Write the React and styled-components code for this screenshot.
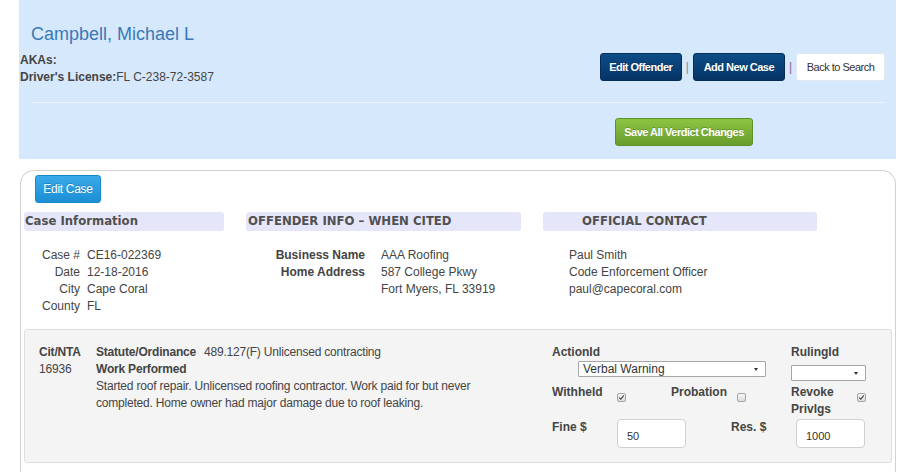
import React from 'react'
import styled, { createGlobalStyle } from 'styled-components'

const GlobalStyle = createGlobalStyle`
  body {
    margin: 0;
    font-family: "Liberation Sans", Arial, sans-serif;
    font-size: 12px;
    color: #333;
    background: #fff;
  }
`

const Page = styled.div`
  width: 877px;
  margin-left: 19px;
`

const HeaderPanel = styled.div`
  background: #d6e8fc;
  height: 159px;
  box-sizing: border-box;
  padding-top: 24px;
`

const OffenderName = styled.div`
  font-size: 18px;
  line-height: 20px;
  color: #3a79b6;
  padding-left: 12px;
`

const InfoRow = styled.div`
  display: flex;
  justify-content: space-between;
  align-items: flex-start;
  margin-top: 8px;
  padding-left: 1px;
  padding-right: 11px;
`

const InfoLines = styled.div`
  line-height: 17px;
  color: #444;
`

const Bold = styled.span`
  font-weight: bold;
  color: #444;
`

const ButtonGroup = styled.div`
  display: flex;
  align-items: center;
  margin-top: 1px;
`

const Button = styled.button`
  box-sizing: border-box;
  height: 28px;
  width: ${p => p.$w}px;
  padding: 0;
  border-radius: 3px;
  font-family: "Liberation Sans", Arial, sans-serif;
  font-size: ${p => (p.$variant === 'info' ? 12 : 11)}px;
  letter-spacing: ${p => (p.$variant === 'info' ? -0.3 : -0.5)}px;
  font-weight: ${p => (p.$variant === 'light' || p.$variant === 'info' ? 'normal' : 'bold')};
  cursor: pointer;
  color: ${p => (p.$variant === 'light' ? '#333' : '#fff')};
  border: 1px solid
    ${p =>
      p.$variant === 'light'
        ? '#e3e9f1'
        : p.$variant === 'success'
        ? '#5e9127'
        : p.$variant === 'info'
        ? '#1c88cc'
        : '#052d57'};
  background: ${p =>
    p.$variant === 'light'
      ? '#fff'
      : p.$variant === 'success'
      ? 'linear-gradient(#8cc543, #689c2c)'
      : p.$variant === 'info'
      ? 'linear-gradient(#3aaaea, #1b8ed5)'
      : 'linear-gradient(#0d4d88, #053465)'};
  text-shadow: ${p => (p.$variant === 'light' ? 'none' : '0 -1px 0 rgba(0,0,0,0.2)')};
`

const Separator = styled.span`
  margin: 0 4px;
  font-size: 12px;
  color: ${p => p.$color};
`

const Rule = styled.div`
  height: 1px;
  background: #ebf2fb;
  margin: 16px 11px 0 12px;
`

const SaveRow = styled.div`
  display: flex;
  justify-content: flex-end;
  padding-right: 143px;
  margin-top: 15px;
`

const CaseCard = styled.div`
  margin: 11px 0 0 1px;
  border: 1px solid #d3d3d3;
  border-bottom: none;
  border-radius: 14px 14px 0 0;
  min-height: 320px;
  padding: 4px 3px 0 3px;
`

const EditCaseWrap = styled.div`
  padding-left: 11px;
`

const Sections = styled.div`
  display: grid;
  grid-template-columns: 200px 275px 274px;
  column-gap: 22px;
  margin-top: 9px;
`

const SectionTitle = styled.div`
  height: 19px;
  line-height: 19px;
  background: #e6e6fa;
  border-radius: 3px;
  font-family: "DejaVu Sans", Verdana, sans-serif;
  font-size: 11.7px;
  font-weight: bold;
  color: #505050;
  padding-left: ${p => p.$indent}px;
`

const FieldGrid = styled.div`
  display: grid;
  grid-template-columns: ${p => p.$label}px 1fr;
  column-gap: ${p => p.$gap}px;
  line-height: 17px;
  margin-top: 16px;
`

const FieldLabel = styled.div`
  text-align: right;
  color: #444;
  font-weight: ${p => (p.$bold ? 'bold' : 'normal')};
`

const FieldValue = styled.div`
  color: #444;
`

const ContactLines = styled.div`
  margin-top: 16px;
  padding-left: 26px;
  line-height: 17px;
  color: #444;
`

const ChargeBox = styled.div`
  box-sizing: border-box;
  margin-top: 14px;
  width: 868px;
  height: 134px;
  background: #f4f4f4;
  border: 1px solid #dedede;
  border-radius: 3px;
  padding: 14px 0 0 14px;
  display: flex;
`

const CitColumn = styled.div`
  width: 57px;
  line-height: 17px;
  letter-spacing: -0.2px;
  color: #444;
`

const Detail = styled.div`
  width: 400px;
  margin-right: 56px;
  line-height: 17px;
  letter-spacing: -0.2px;
  color: #444;
`

const StatuteValue = styled.span`
  margin-left: 8px;
`

const VerdictGrid = styled.div`
  display: grid;
  grid-template-columns: 65px 54px 60px 60px 66px 19px;
  grid-template-rows: 40px 35px auto;
  line-height: 17px;
`

const VLabel = styled.div`
  font-weight: bold;
  color: #444;
  grid-column: ${p => p.$col};
`

const SelectBox = styled.div`
  position: relative;
  box-sizing: border-box;
  width: ${p => p.$w}px;
  height: 16px;
  margin-left: ${p => p.$left || 0}px;
  margin-top: ${p => p.$top || 0}px;
  border: 1px solid #a6a6a6;
  border-radius: 1px;
  background: #fff;
  font-size: 12px;
  font-weight: normal;
  line-height: 14px;
  padding-left: 4px;
  color: #333;
`

const Arrow = styled.span`
  position: absolute;
  right: 7px;
  top: 6px;
  width: 0;
  height: 0;
  border-left: 2px solid transparent;
  border-right: 2px solid transparent;
  border-top: 3px solid #333;
`

const CheckCell = styled.div`
  grid-column: ${p => p.$col};
  padding-left: ${p => p.$left || 0}px;
`

const Check = styled.span`
  display: block;
  box-sizing: border-box;
  width: 9px;
  height: 9px;
  margin-top: 9px;
  border: 1px solid #a5a5a5;
  border-radius: 2px;
  background: linear-gradient(#f6f6f6, #dcdcdc);
  svg {
    display: block;
  }
`

const AmountInput = styled.div`
  grid-column: ${p => p.$col};
  box-sizing: border-box;
  width: 69px;
  height: 29px;
  margin-left: ${p => p.$left || 0}px;
  border: 1px solid #cfcfcf;
  border-radius: 4px;
  background: #fff;
  font-size: 11px;
  line-height: 29px;
  padding: 2px 0 0 9px;
  color: #333;
`

function Checkbox({ checked }) {
  return (
    <Check>
      {checked && (
        <svg width="7" height="7" viewBox="0 0 7 7">
          <path d="M1.2 3.6 L2.8 5.2 L5.8 1.4" fill="none" stroke="#444" strokeWidth="1.1" />
        </svg>
      )}
    </Check>
  )
}

export default function App() {
  return (
    <Page>
      <GlobalStyle />
      <HeaderPanel>
        <OffenderName>Campbell, Michael L</OffenderName>
        <InfoRow>
          <InfoLines>
            <div>
              <Bold>AKAs:</Bold>
            </div>
            <div>
              <Bold>Driver's License:</Bold>FL C-238-72-3587
            </div>
          </InfoLines>
          <ButtonGroup>
            <Button $w={82}>Edit Offender</Button>
            <Separator $color="#7d8b9a">|</Separator>
            <Button $w={92}>Add New Case</Button>
            <Separator $color="#8a5aa3">|</Separator>
            <Button $w={89} $variant="light">
              Back to Search
            </Button>
          </ButtonGroup>
        </InfoRow>
        <Rule />
        <SaveRow>
          <Button $w={138} $variant="success">
            Save All Verdict Changes
          </Button>
        </SaveRow>
      </HeaderPanel>

      <CaseCard>
        <EditCaseWrap>
          <Button $w={66} $variant="info">
            Edit Case
          </Button>
        </EditCaseWrap>

        <Sections>
          <div>
            <SectionTitle $indent={1}>Case Information</SectionTitle>
            <FieldGrid $label={56} $gap={7}>
              <FieldLabel>Case #</FieldLabel>
              <FieldValue>CE16-022369</FieldValue>
              <FieldLabel>Date</FieldLabel>
              <FieldValue>12-18-2016</FieldValue>
              <FieldLabel>City</FieldLabel>
              <FieldValue>Cape Coral</FieldValue>
              <FieldLabel>County</FieldLabel>
              <FieldValue>FL</FieldValue>
            </FieldGrid>
          </div>
          <div>
            <SectionTitle $indent={2}>OFFENDER INFO – WHEN CITED</SectionTitle>
            <FieldGrid $label={119} $gap={16}>
              <FieldLabel $bold>Business Name</FieldLabel>
              <FieldValue>AAA Roofing</FieldValue>
              <FieldLabel $bold>Home Address</FieldLabel>
              <FieldValue>
                587 College Pkwy
                <br />
                Fort Myers, FL 33919
              </FieldValue>
            </FieldGrid>
          </div>
          <div>
            <SectionTitle $indent={39}>OFFICIAL CONTACT</SectionTitle>
            <ContactLines>
              <div>Paul Smith</div>
              <div>Code Enforcement Officer</div>
              <div>paul@capecoral.com</div>
            </ContactLines>
          </div>
        </Sections>

        <ChargeBox>
          <CitColumn>
            <Bold>Cit/NTA</Bold>
            <div>16936</div>
          </CitColumn>
          <Detail>
            <div>
              <Bold>Statute/Ordinance</Bold>
              <StatuteValue>489.127(F) Unlicensed contracting</StatuteValue>
            </div>
            <div>
              <Bold>Work Performed</Bold>
            </div>
            <div>
              Started roof repair. Unlicensed roofing contractor. Work paid for but never
              completed. Home owner had major damage due to roof leaking.
            </div>
          </Detail>
          <VerdictGrid>
            <VLabel $col="1 / 5">
              ActionId
              <SelectBox $w={188} $left={26}>
                Verbal Warning
                <Arrow />
              </SelectBox>
            </VLabel>
            <VLabel $col="5 / 7">
              RulingId
              <SelectBox $w={75} $top={4}>
                <Arrow />
              </SelectBox>
            </VLabel>

            <VLabel $col="1">Withheld</VLabel>
            <CheckCell $col="2">
              <Checkbox checked />
            </CheckCell>
            <VLabel $col="3">Probation</VLabel>
            <CheckCell $col="4" $left={6}>
              <Checkbox />
            </CheckCell>
            <VLabel $col="5">
              Revoke
              <br />
              Privlgs
            </VLabel>
            <CheckCell $col="6">
              <Checkbox checked />
            </CheckCell>

            <VLabel $col="1">Fine $</VLabel>
            <AmountInput $col="2 / 4">50</AmountInput>
            <VLabel $col="4">Res. $</VLabel>
            <AmountInput $col="5 / 7" $left={5}>
              1000
            </AmountInput>
          </VerdictGrid>
        </ChargeBox>
      </CaseCard>
    </Page>
  )
}
